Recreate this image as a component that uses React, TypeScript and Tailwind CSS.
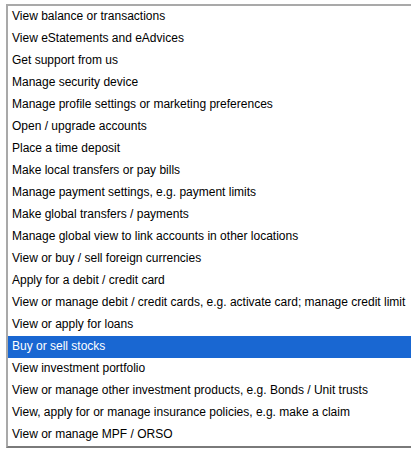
import React from 'react';

const options = [
  'View balance or transactions',
  'View eStatements and eAdvices',
  'Get support from us',
  'Manage security device',
  'Manage profile settings or marketing preferences',
  'Open / upgrade accounts',
  'Place a time deposit',
  'Make local transfers or pay bills',
  'Manage payment settings, e.g. payment limits',
  'Make global transfers / payments',
  'Manage global view to link accounts in other locations',
  'View or buy / sell foreign currencies',
  'Apply for a debit / credit card',
  'View or manage debit / credit cards, e.g. activate card; manage credit limit',
  'View or apply for loans',
  'Buy or sell stocks',
  'View investment portfolio',
  'View or manage other investment products, e.g. Bonds / Unit trusts',
  'View, apply for or manage insurance policies, e.g. make a claim',
  'View or manage MPF / ORSO',
];

const App: React.FC = () => {
  const selected = 15;

  return (
    <div className="w-[411px] h-[450px] overflow-hidden bg-white pt-1 pl-1.5">
      <ul
        className="w-[420px] border-t-2 border-l-2 border-b-2 border-t-[#a9a9a9] border-l-[#a9a9a9] border-b-[#7a7a7a] bg-white"
        style={{ fontFamily: '"Liberation Sans", Arial, sans-serif' }}
      >
        {options.map((label, i) => (
          <li
            key={label}
            className={`h-[22px] pl-[4px] pb-[3px] flex items-center text-[12px] whitespace-nowrap ${
              i === selected ? 'bg-[#1967d2] text-white' : 'text-black'
            }`}
          >
            {label}
          </li>
        ))}
      </ul>
    </div>
  );
};

export default App;
